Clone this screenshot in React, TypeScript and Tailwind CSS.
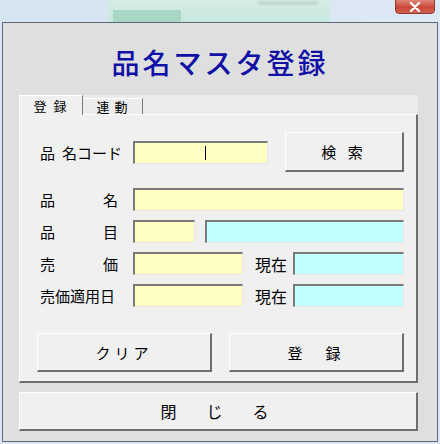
import { ReactNode } from "react";

const jp = "font-['Noto_Sans_CJK_JP',sans-serif]";

const raised =
  "border-t border-l border-b-2 border-r-2 border-t-white border-l-white border-b-[#6e6e6e] border-r-[#6e6e6e] bg-[#f0f0f0]";

const sunken =
  "border-t-2 border-l-2 border-b border-r border-t-[#7a7a7a] border-l-[#7a7a7a] border-b-[#e6e6e6] border-r-[#e6e6e6]";

type FieldProps = {
  width: string;
  color: "yellow" | "cyan";
  children?: ReactNode;
};

function Field({ width, color, children }: FieldProps) {
  const bg = color === "yellow" ? "bg-[#ffffc4]" : "bg-[#c2ffff]";
  return (
    <div className={`${sunken} ${bg} ${width} flex h-[23px] shrink-0 items-center`}>
      {children}
    </div>
  );
}

function Label({ parts }: { parts: string[] }) {
  return (
    <div className="flex w-[78px] shrink-0 justify-between whitespace-nowrap text-[15px] leading-none text-black">
      {parts.map((p) => (
        <span key={p}>{p}</span>
      ))}
    </div>
  );
}

function Button({
  className,
  children,
}: {
  className: string;
  children: ReactNode;
}) {
  return (
    <div
      className={`${raised} ${className} flex shrink-0 items-center justify-center whitespace-nowrap text-[15px] leading-none text-black`}
    >
      {children}
    </div>
  );
}

export default function App() {
  return (
    <div className={`flex h-[444px] w-[440px] flex-col bg-[#d8e6f3] ${jp}`}>
      {/* desktop behind the dialog */}
      <div className="relative flex h-[22px] bg-[linear-gradient(90deg,#d5e4f1,#dde9f5)]">
        <div className="w-[108px]" />
        <div className="flex w-[222px] flex-col bg-[linear-gradient(180deg,#d6ece6,#c6e7df)]">
          <div className="ml-[150px] mt-[1px] h-[4px] w-[60px] bg-[#c2d6d0] blur-[1px]" />
          <div className="ml-[5px] mt-[5px] h-[12px] w-[68px] bg-[#aad6c6] blur-[0.5px]" />
        </div>
        <div className="flex-1" />
        <div className="absolute right-[5px] top-[-3px] flex h-[17px] w-[40px] items-center justify-center rounded-b-[4px] border border-[#8a3a30] bg-[linear-gradient(180deg,#e79a8a,#c9483a_60%,#d2604e)]">
          <svg width="12" height="10" viewBox="0 0 12 10" className="mt-[3px]">
            <path
              d="M2 1 L10 9 M10 1 L2 9"
              stroke="#ffffff"
              strokeWidth="2.4"
              strokeLinecap="round"
            />
          </svg>
        </div>
      </div>

      {/* dialog */}
      <div className="ml-[2px] flex h-[420px] w-[436px] flex-col border border-[#5f6a76] bg-[#dfdfdf]">
        <div className="flex h-[72px] items-center justify-center pt-[6px]">
          <h1 className="text-[28px] font-medium leading-none tracking-[3px] text-[#1010a6]">
            品名マスタ登録
          </h1>
        </div>

        <div className="ml-[16px] flex w-[399px] flex-col">
          <div className="flex h-[19px] items-end bg-[#ebebeb]">
            <div className="relative z-10 -mb-[1px] flex h-[20px] w-[64px] items-center justify-center border-t border-l border-r border-t-white border-l-white border-r-[#7a7a7a] bg-[#f0f0f0] text-[13px] leading-none tracking-[2px]">
              登 録
            </div>
            <div className="flex h-[16px] w-[60px] items-center justify-center border-t border-r border-t-white border-r-[#7a7a7a] bg-[#ececec] text-[13px] leading-none tracking-[1px]">
              連 動
            </div>
          </div>

          <div className="flex flex-col border-t border-l border-r-2 border-b-2 border-t-white border-l-white border-r-[#6e6e6e] border-b-[#6e6e6e] bg-[#f0f0f0] pt-[17px] pb-[9px]">
            <div className="flex h-[40px] items-center pl-[20px]">
              <div className="flex w-[78px] shrink-0 whitespace-nowrap text-[15px] leading-none">
                <span>品</span>
                <span className="ml-[7px]">名コード</span>
              </div>
              <Field width="ml-[15px] w-[135px]" color="yellow">
                <span className="ml-[70px] h-[14px] w-[1px] bg-black" />
              </Field>
              <Button className="ml-[17px] h-[40px] w-[119px] tracking-[4px]">
                検 索
              </Button>
            </div>

            <div className="mt-[16px] flex items-center pl-[20px]">
              <Label parts={["品", "名"]} />
              <Field width="ml-[15px] w-[271px]" color="yellow" />
            </div>

            <div className="mt-[9px] flex items-center pl-[20px]">
              <Label parts={["品", "目"]} />
              <Field width="ml-[15px] w-[62px]" color="yellow" />
              <Field width="ml-[10px] w-[199px]" color="cyan" />
            </div>

            <div className="mt-[9px] flex items-center pl-[20px]">
              <Label parts={["売", "価"]} />
              <Field width="ml-[15px] w-[110px]" color="yellow" />
              <span className="ml-[12px] w-[32px] whitespace-nowrap text-[16px] leading-none">
                現在
              </span>
              <Field width="ml-[6px] w-[111px]" color="cyan" />
            </div>

            <div className="mt-[9px] flex items-center pl-[20px]">
              <Label parts={["売価適用日"]} />
              <Field width="ml-[15px] w-[110px]" color="yellow" />
              <span className="ml-[12px] w-[32px] whitespace-nowrap text-[16px] leading-none">
                現在
              </span>
              <Field width="ml-[6px] w-[111px]" color="cyan" />
            </div>

            <div className="mt-[26px] flex pl-[17px]">
              <Button className="h-[39px] w-[175px] tracking-[4px]">クリア</Button>
              <Button className="ml-[17px] h-[39px] w-[175px] tracking-[4px]">
                登　録
              </Button>
            </div>
          </div>

          <Button className="mt-[9px] h-[39px] w-[399px] text-[16px] tracking-[7px]">
            閉　じ　る
          </Button>
        </div>
      </div>
    </div>
  );
}
